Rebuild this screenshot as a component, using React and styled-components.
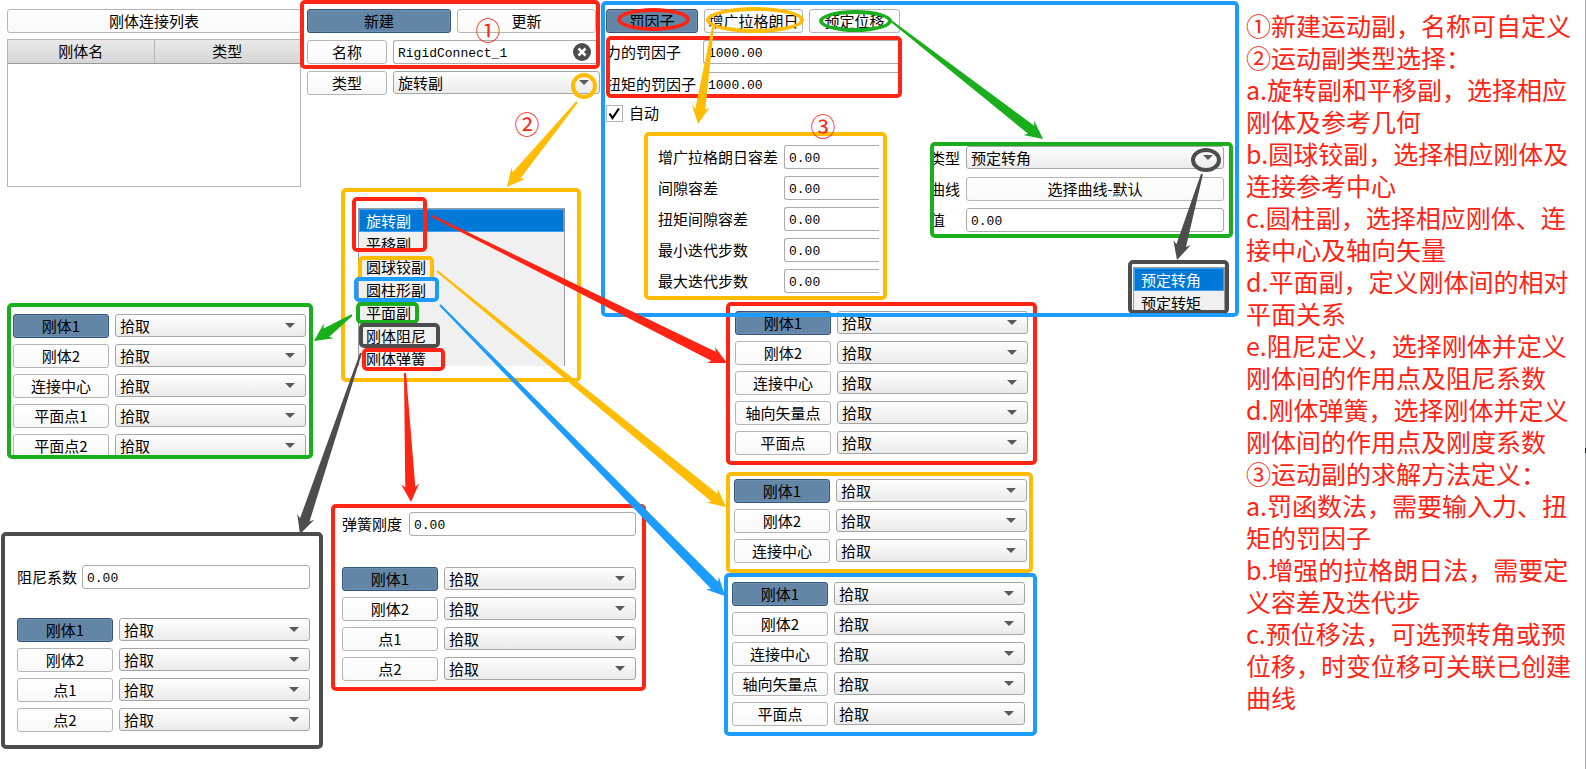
import React, { useId } from "react";
import styled, { createGlobalStyle, css } from "styled-components";

const RED = "#ff2414";
const YELLOW = "#ffbc05";
const BLUE = "#1c9cff";
const GREEN = "#1aae1c";
const DARK = "#4d4d4d";

const Global = createGlobalStyle`
  * { box-sizing: border-box; }
  body {
    margin: 0;
    background: #fff;
    color: #000;
    font: 15px/22px "Noto Sans CJK SC", "Noto Sans", sans-serif;
  }
  button, input, select { font: inherit; color: inherit; margin: 0; }
`;

/* ---------- page ---------- */

const Page = styled.main`
  display: flex;
  min-height: 100vh;
`;

const Board = styled.div`
  position: relative;
  flex: 1 0 1239px;
  min-height: 752px;
`;

const TopBand = styled.div`
  position: relative;
  z-index: 1;
  display: flex;
  align-items: flex-start;
  padding-left: 7px;
`;

const Notes = styled.aside`
  position: relative;
  flex: 0 0 347px;
  padding: 9px 12px 0 7px;
  border-right: 1px solid #a3a6bd;
  color: ${RED};
  font-size: 25px;
  line-height: 32px;

  p { margin: 0; }
`;

const EdgeMark = styled.span`
  position: absolute;
  right: -1px;
  top: 448px;
  width: 1px;
  height: 5px;
  background: #222;
`;

/* ---------- controls ---------- */

const Button = styled.button`
  flex: ${(p) => (p.$width ? `0 0 ${p.$width}px` : "1 1 0")};
  min-width: 0;
  height: 24px;
  padding: 0;
  border: 1px solid #b5b5b5;
  border-radius: 3px;
  background: linear-gradient(#fff, #f8f8f8);
  line-height: 22px;
  text-align: center;
  white-space: nowrap;
  ${(p) =>
    p.$active &&
    css`
      border-color: #34557a;
      background: #6385a6;
      box-shadow: inset 0 0 0 1px #6f90b0;
    `}
`;

const TextInput = styled.input`
  flex: 1 1 0;
  width: 100%;
  min-width: 0;
  height: 24px;
  padding: 2px 5px 0 4px;
  border: 1px solid #ababab;
  border-radius: 3px;
  background: #fff;
  font-family: "Liberation Mono", monospace;
  font-size: 13px;
  line-height: 20px;
  outline: none;
  ${(p) =>
    p.$open &&
    css`
      border-right: 0;
      border-radius: 3px 0 0 3px;
    `}
`;

const SelectBox = styled.span`
  position: relative;
  display: flex;
  flex: 1 1 0;
  min-width: 0;

  &::after {
    content: "";
    position: absolute;
    right: 11px;
    top: 9px;
    border: 5px solid transparent;
    border-top-color: #5a5a5a;
    border-bottom: 0;
    pointer-events: none;
  }

  select {
    appearance: none;
    width: 100%;
    height: 23px;
    padding: 0 24px 0 4px;
    border: 1px solid #a5a5a5;
    border-radius: 3px;
    background: linear-gradient(#fefefe, #ebebeb);
    line-height: 20px;
  }
`;

const Row = styled.div`
  display: flex;
  align-items: flex-start;
  gap: 6px;
`;

const Stack = styled.div`
  display: flex;
  flex-direction: column;
  gap: ${(p) => p.$gap}px;
`;

/* ---------- coloured frames ---------- */

const Frame = styled.section`
  border: 4px solid ${(p) => p.$color};
  border-radius: 5px;
`;

const Callout = styled(Frame)`
  position: absolute;
  left: ${(p) => p.$x}px;
  top: ${(p) => p.$y}px;
  width: ${(p) => p.$w}px;
  height: ${(p) => p.$h}px;
  padding: ${(p) => p.$pad || "0"};
  overflow: hidden;
`;

const Mark = styled.span`
  position: absolute;
  z-index: 2;
  left: ${(p) => p.$x}px;
  top: ${(p) => p.$y}px;
  width: ${(p) => p.$w}px;
  height: ${(p) => p.$h}px;
  border: 4px solid ${(p) => p.$color};
  border-radius: ${(p) => (p.$round ? "50%" : "5px")};
  pointer-events: none;
`;

const Step = styled.span`
  position: absolute;
  z-index: 4;
  left: ${(p) => p.$x}px;
  top: ${(p) => p.$y}px;
  width: 26px;
  color: ${RED};
  font-size: 25px;
  line-height: 26px;
  text-align: center;
`;

const Arrows = styled.svg`
  position: absolute;
  z-index: 3;
  left: 0;
  top: 0;
  width: 1239px;
  height: 752px;
  pointer-events: none;
`;

/* ---------- body list ---------- */

const ListPanel = styled.section`
  display: flex;
  flex-direction: column;
  gap: 6px;
  width: 294px;
  margin-right: -1px;
  padding-top: 9px;
`;

const ListTitle = styled(Button)`
  flex: 0 0 24px;
`;

const TableBox = styled.div`
  height: 148px;
  border: 1px solid #b5b5b5;
`;

const BodyTable = styled.table`
  width: 100%;
  border-collapse: collapse;
  table-layout: fixed;

  th {
    height: 23px;
    padding: 0;
    border-bottom: 1px solid #999;
    background: linear-gradient(#e9e9e9, #d6d6d6);
    font-weight: 400;
  }
  th + th { border-left: 1px solid #b5b5b5; }
`;

/* ---------- create panel ---------- */

const CreatePanel = styled.section`
  position: relative;
  width: 301px;
  padding-right: 1px;
`;

const CreateFrame = styled(Frame)`
  padding: 5px 0 1px 3px;
`;

const TypeRow = styled(Row)`
  padding: 2px 0 0 7px;
`;

const NameField = styled.span`
  position: relative;
  display: flex;
  flex: 1 1 0;
`;

const ClearButton = styled.button`
  position: absolute;
  right: 5px;
  top: 3px;
  width: 18px;
  height: 18px;
  padding: 0;
  border: 0;
  background: none;

  svg { display: block; }
`;

/* ---------- solver panel ---------- */

const SolverFrame = styled(Frame)`
  flex: 1 1 0;
  min-height: 316px;
  margin-top: 1px;
  padding: 4px 0 0 1px;
  border-color: ${BLUE};
`;

const PenaltyFrame = styled(Frame)`
  display: flex;
  flex-direction: column;
  gap: 8px;
  width: 296px;
  height: 62px;
  margin: 3px 0 7px;
  overflow: hidden;
`;

const FieldLabel = styled.label`
  flex: 0 0 ${(p) => p.$width}px;
  line-height: 24px;
  white-space: nowrap;
`;

const FieldRow = styled.div`
  display: flex;
  margin-left: ${(p) => (p.$tucked ? "-4px" : "0")};
`;

const CheckLabel = styled.label`
  display: flex;
  align-items: center;
  gap: 6px;
  height: 16px;

  input {
    appearance: none;
    width: 17px;
    height: 17px;
    border: 1px solid #b5b5b5;
    background: #fff;
  }
`;

const CheckBox = styled.span`
  position: relative;
  display: flex;

  svg {
    position: absolute;
    left: 2px;
    top: 2px;
    display: none;
    pointer-events: none;
  }
  input:checked + svg { display: block; }
`;

/* ---------- popup lists ---------- */

const PopupList = styled.ul`
  max-height: 158px;
  margin: 0;
  padding: 0;
  overflow: hidden;
  list-style: none;
  border: 1px solid #999;
  border-bottom: 0;
  background: #f0f0f0;
`;

const PopupItem = styled.li`
  height: 23px;
  padding-left: 7px;
  line-height: 23px;
  ${(p) =>
    p.$selected &&
    css`
      border: 1px solid #3ba0f0;
      padding-left: 6px;
      background: #0078d7;
      color: #fff;
      line-height: 21px;
    `}
`;

/* ---------- composed parts ---------- */

function Picker({ label, options }) {
  return (
    <SelectBox>
      <select aria-label={label}>
        {options.map((o) => (
          <option key={o}>{o}</option>
        ))}
      </select>
    </SelectBox>
  );
}

function PickRows({ names }) {
  return (
    <Stack $gap={6}>
      {names.map((name, i) => (
        <Row key={name}>
          <Button type="button" $width={96} $active={i === 0}>
            {name}
          </Button>
          <Picker label={name} options={["拾取"]} />
        </Row>
      ))}
    </Stack>
  );
}

function Field({ label, value, width, open, tucked }) {
  const id = useId();
  return (
    <FieldRow $tucked={tucked}>
      <FieldLabel htmlFor={id} $width={width}>
        {label}
      </FieldLabel>
      <TextInput id={id} defaultValue={value} $open={open} />
    </FieldRow>
  );
}

function Popup({ items }) {
  return (
    <PopupList role="listbox">
      {items.map((item, i) => (
        <PopupItem key={item} role="option" aria-selected={i === 0} $selected={i === 0}>
          {item}
        </PopupItem>
      ))}
    </PopupList>
  );
}

function Arrow({ from, to, color, shaft = 5 }) {
  const dx = to[0] - from[0];
  const dy = to[1] - from[1];
  const len = Math.hypot(dx, dy);
  const u = [dx / len, dy / len];
  const at = (back, side) =>
    `${to[0] - u[0] * back - u[1] * side},${to[1] - u[1] * back + u[0] * side}`;
  const points = [
    at(len, 1),
    at(15, shaft),
    at(18, 9),
    at(0, 0),
    at(18, -9),
    at(15, -shaft),
    at(len, -1),
  ].join(" ");
  return <polygon points={points} fill={color} />;
}

const JOINTS = ["旋转副", "平移副", "圆球铰副", "圆柱形副", "平面副", "刚体阻尼", "刚体弹簧"];
const TOLERANCES = ["增广拉格朗日容差", "间隙容差", "扭矩间隙容差", "最小迭代步数", "最大迭代步数"];
const AXIS_PICKS = ["刚体1", "刚体2", "连接中心", "轴向矢量点", "平面点"];
const NOTES = [
  "①新建运动副，名称可自定义",
  "②运动副类型选择：",
  "a.旋转副和平移副，选择相应刚体及参考几何",
  "b.圆球铰副，选择相应刚体及连接参考中心",
  "c.圆柱副，选择相应刚体、连接中心及轴向矢量",
  "d.平面副，定义刚体间的相对平面关系",
  "e.阻尼定义，选择刚体并定义刚体间的作用点及阻尼系数",
  "d.刚体弹簧，选择刚体并定义刚体间的作用点及刚度系数",
  "③运动副的求解方法定义：",
  "a.罚函数法，需要输入力、扭矩的罚因子",
  "b.增强的拉格朗日法，需要定义容差及迭代步",
  "c.预位移法，可选预转角或预位移，时变位移可关联已创建曲线",
];

export default function App() {
  return (
    <Page lang="zh-CN">
      <Global />
      <Board>
        <TopBand>
          <ListPanel>
            <ListTitle type="button">刚体连接列表</ListTitle>
            <TableBox>
              <BodyTable>
                <thead>
                  <tr>
                    <th scope="col">刚体名</th>
                    <th scope="col">类型</th>
                  </tr>
                </thead>
              </BodyTable>
            </TableBox>
          </ListPanel>

          <CreatePanel>
            <CreateFrame $color={RED}>
              <Stack $gap={7}>
                <Row>
                  <Button type="button" $width={144} $active>新建</Button>
                  <Button type="button">更新</Button>
                </Row>
                <Row>
                  <Button type="button" $width={80}>名称</Button>
                  <NameField>
                    <TextInput aria-label="名称" defaultValue="RigidConnect_1" $open />
                    <ClearButton type="button" aria-label="清除">
                      <svg width="18" height="18" viewBox="0 0 18 18">
                        <circle cx="9" cy="9" r="9" fill={DARK} />
                        <path d="M5.5 5.5l7 7M12.5 5.5l-7 7" stroke="#fff" strokeWidth="2.6" />
                      </svg>
                    </ClearButton>
                  </NameField>
                </Row>
              </Stack>
            </CreateFrame>
            <TypeRow>
              <Button type="button" $width={80}>类型</Button>
              <Picker label="类型" options={JOINTS} />
            </TypeRow>
          </CreatePanel>

          <SolverFrame>
            <Row>
              <Button type="button" $width={92} $active>罚因子</Button>
              <Button type="button" $width={99}>增广拉格朗日</Button>
              <Button type="button" $width={91}>预定位移</Button>
            </Row>
            <PenaltyFrame $color={RED}>
              <Field label="力的罚因子" value="1000.00" width={97} open tucked />
              <Field label="扭矩的罚因子" value="1000.00" width={97} open tucked />
            </PenaltyFrame>
            <CheckLabel>
              <CheckBox>
                <input type="checkbox" defaultChecked />
                <svg width="13" height="13" viewBox="0 0 13 13">
                  <path d="M1.5 6.5l3 4.5L11 1.5" fill="none" stroke="#000" strokeWidth="2.2" />
                </svg>
              </CheckBox>
              自动
            </CheckLabel>
          </SolverFrame>
        </TopBand>

        <Callout $color={YELLOW} $x={341} $y={188} $w={240} $h={194} $pad="16px 12px 0 13px">
          <Popup items={JOINTS} />
        </Callout>
        <Callout $color={GREEN} $x={7} $y={303} $w={306} $h={156} $pad="7px 3px 0 2px">
          <PickRows names={["刚体1", "刚体2", "连接中心", "平面点1", "平面点2"]} />
        </Callout>
        <Callout $color={DARK} $x={1} $y={532} $w={322} $h={217} $pad="29px 9px 0 12px">
          <Stack $gap={29}>
            <Field label="阻尼系数" value="0.00" width={65} />
            <PickRows names={["刚体1", "刚体2", "点1", "点2"]} />
          </Stack>
        </Callout>
        <Callout $color={RED} $x={331} $y={504} $w={315} $h={187} $pad="4px 6px 0 7px">
          <Stack $gap={31}>
            <Field label="弹簧刚度" value="0.00" width={67} />
            <PickRows names={["刚体1", "刚体2", "点1", "点2"]} />
          </Stack>
        </Callout>
        <Callout $color={RED} $x={726} $y={302} $w={311} $h={163} $pad="5px 5px 0 5px">
          <PickRows names={AXIS_PICKS} />
        </Callout>
        <Callout $color={YELLOW} $x={726} $y={472} $w={307} $h={101} $pad="3px 2px 0 4px">
          <PickRows names={["刚体1", "刚体2", "连接中心"]} />
        </Callout>
        <Callout $color={BLUE} $x={724} $y={573} $w={313} $h={163} $pad="5px 8px 0 4px">
          <PickRows names={AXIS_PICKS} />
        </Callout>
        <Callout $color={YELLOW} $x={644} $y={132} $w={243} $h={168} $pad="9px 4px 0 10px">
          <Stack $gap={7}>
            {TOLERANCES.map((name) => (
              <Field key={name} label={name} value="0.00" width={126} open />
            ))}
          </Stack>
        </Callout>
        <Callout $color={GREEN} $x={930} $y={142} $w={303} $h={96} $pad="0 5px 0 0">
          <Stack $gap={7}>
            <FieldRow $tucked>
              <FieldLabel as="span" $width={36}>类型</FieldLabel>
              <Picker label="类型" options={["预定转角", "预定转矩"]} />
            </FieldRow>
            <FieldRow $tucked>
              <FieldLabel as="span" $width={36}>曲线</FieldLabel>
              <Button type="button">选择曲线-默认</Button>
            </FieldRow>
            <Field label="值" value="0.00" width={36} tucked />
          </Stack>
        </Callout>
        <Callout $color={DARK} $x={1128} $y={260} $w={101} $h={54} $pad="3px 0 0 1px">
          <Popup items={["预定转角", "预定转矩"]} />
        </Callout>

        <Mark $color={RED} $x={352} $y={197} $w={75} $h={55} />
        <Mark $color={YELLOW} $x={358} $y={256} $w={76} $h={25} />
        <Mark $color={BLUE} $x={354} $y={277} $w={85} $h={25} />
        <Mark $color={GREEN} $x={356} $y={302} $w={63} $h={22} />
        <Mark $color={DARK} $x={359} $y={323} $w={81} $h={25} />
        <Mark $color={RED} $x={362} $y={348} $w={83} $h={23} />
        <Mark $round $color={RED} $x={617} $y={8} $w={73} $h={23} />
        <Mark $round $color={YELLOW} $x={706} $y={7} $w={98} $h={26} />
        <Mark $round $color={GREEN} $x={819} $y={10} $w={73} $h={22} />
        <Mark $round $color={YELLOW} $x={571} $y={73} $w={26} $h={26} />
        <Mark $round $color={DARK} $x={1191} $y={148} $w={30} $h={24} />

        <Arrows viewBox="0 0 1239 752" aria-hidden="true">
          <Arrow color={YELLOW} from={[577, 102]} to={[507, 187]} />
          <Arrow color={YELLOW} from={[713, 27]} to={[698, 124]} />
          <Arrow color={GREEN} from={[891, 21]} to={[1043, 139]} />
          <Arrow color={DARK} from={[1202, 174]} to={[1177, 260]} />
          <Arrow color={RED} from={[432, 216]} to={[727, 363]} />
          <Arrow color={YELLOW} from={[437, 271]} to={[726, 507]} />
          <Arrow color={BLUE} from={[440, 305]} to={[725, 596]} />
          <Arrow color={GREEN} from={[352, 315]} to={[314, 341]} />
          <Arrow color={DARK} from={[361, 353]} to={[300, 534]} />
          <Arrow color={RED} from={[405, 373]} to={[411, 502]} />
        </Arrows>

        <Step $x={475} $y={16}>①</Step>
        <Step $x={514} $y={110}>②</Step>
        <Step $x={810} $y={112}>③</Step>
      </Board>

      <Notes>
        {NOTES.map((line) => (
          <p key={line}>{line}</p>
        ))}
        <EdgeMark />
      </Notes>
    </Page>
  );
}
